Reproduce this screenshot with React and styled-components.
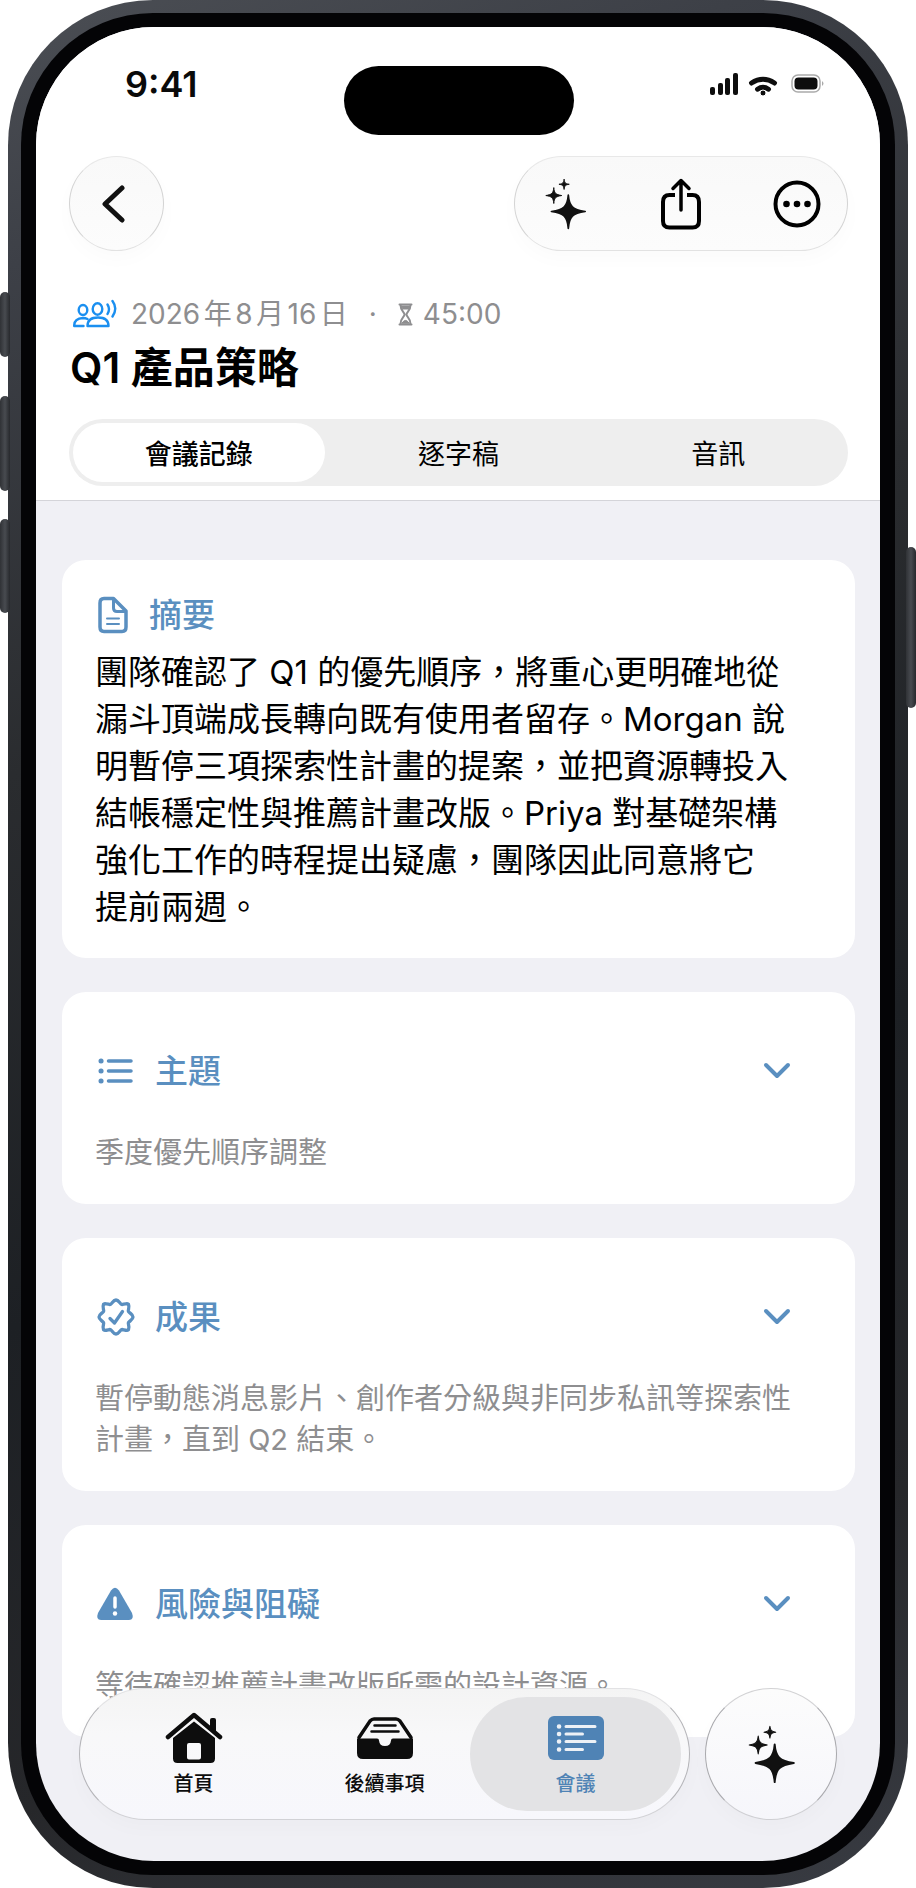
import React from 'react';
import styled, { createGlobalStyle } from "styled-components";

const GlobalStyle = createGlobalStyle`
    *, *::before, *::after {
        box-sizing: border-box;
    }
    body {
        margin: 0;
        background: #fff;
        font-family: Inter, "Noto Sans CJK TC", sans-serif;
        color: #0a0a0a;
    }
    button {
        font-family: inherit;
        color: inherit;
        border: 0;
        padding: 0;
        background: none;
        cursor: pointer;
    }
    h1, h2, p {
        margin: 0;
    }
    svg {
        display: block;
        flex: none;
    }
`

const Phone = styled.div`
    position: relative;
    margin: 0 8px;
    min-height: 100vh;
    padding: 13px;
    border-radius: 145px;
    background: linear-gradient(160deg, #4b4e54 0%, #3d4047 12%, #2a2c2f 35%, #1d2024 60%, #26272a 82%, #393c43 100%);
    display: flex;
`

const SideButton = styled.span`
    position: absolute;
    top: ${props => props.$top}px;
    ${props => props.$side}: -8px;
    width: 10px;
    height: ${props => props.$length}px;
    border-radius: 5px;
    background: linear-gradient(90deg, #303236, #484b50 50%, #27292d);
`

const Bezel = styled.div`
    flex: 1;
    display: flex;
    min-width: 0;
    padding: 14px 15px;
    border-radius: 132px;
    background: #040406;
`

const Screen = styled.div`
    position: relative;
    flex: 1;
    min-width: 0;
    overflow: hidden;
    border-radius: 118px;
    background: #f0f0f5;
`

const Header = styled.header`
    background: #fff;
    border-bottom: 1px solid #d4d4d9;
    padding: 39px 32px 14px 33px;
`

const StatusBar = styled.div`
    display: grid;
    grid-template-columns: 1fr 230px 1fr;
    align-items: start;
`

const Clock = styled.time`
    padding: 0 0 0 56px;
    font-size: 36px;
    line-height: 36px;
    font-weight: 600;
`

const Island = styled.div`
    height: 69px;
    border-radius: 35px;
    background: #000;
`

const StatusIcons = styled.div`
    display: flex;
    justify-content: flex-end;
    padding: 6px 22px 0 0;
`

const Toolbar = styled.div`
    display: flex;
    justify-content: space-between;
    margin-top: 21px;
`

const Glass = styled.div`
    display: flex;
    align-items: center;
    justify-content: space-between;
    border: 1px solid #d4d4d4;
    border-top-color: #e8e8e8;
    border-bottom-color: #e2e2e2;
    border-radius: 66px;
    background: linear-gradient(#f9f9f9, #fcfcfc);
    box-shadow: 0 8px 20px rgba(0, 0, 0, 0.02);
`

const RoundButton = styled(Glass).attrs({ as: "button" })`
    justify-content: center;
    width: ${props => props.$size}px;
    height: ${props => props.$size}px;
`

const BackButton = styled(RoundButton)`
    padding-right: 6px;
`

const ActionGroup = styled(Glass)`
    width: 334px;
    height: 95px;
    padding: 0 10px;
`

const IconButton = styled.button`
    width: 80px;
    height: 80px;
    display: grid;
    place-items: center;
`

const Meta = styled.div`
    display: flex;
    align-items: center;
    margin-top: 43px;
    padding-left: 4px;
    font-size: 28px;
    line-height: 40px;
    color: #8e8e90;
`

const DateText = styled.time`
    margin-left: 14px;
    text-autospace: normal;
`

const Dot = styled.span`
    margin: 0 21px;
`

const Duration = styled.span`
    display: flex;
    align-items: center;
    gap: 10px;
`

const Title = styled.h1`
    margin-top: 9px;
    padding-left: 1px;
    font-size: 42px;
    line-height: 50px;
    font-weight: 600;
    color: #000;
`

const Tabs = styled.div`
    display: grid;
    grid-template-columns: repeat(3, 1fr);
    gap: 8px;
    margin-top: 26px;
    padding: 4px;
    border-radius: 34px;
    background: #eee;
`

const Tab = styled.button`
    height: 59px;
    border-radius: 30px;
    font-size: 27px;
    font-weight: ${props => (props.$active ? 500 : 400)};
    color: #000;
    background: ${props => (props.$active ? "#fff" : "transparent")};
`

const Content = styled.main`
    display: flex;
    flex-direction: column;
    gap: 34px;
    padding: 59px 25px 120px 26px;
`

const Card = styled.section`
    padding: ${props => (props.$open ? "33px 56px 27px 33px" : "57px 64px 31px 33px")};
    border-radius: 24px;
    background: #fff;
`

const CardHead = styled.div`
    display: flex;
    align-items: center;
    height: 44px;
    color: #5a8fc0;
`

const HeadIcon = styled.span`
    width: ${props => (props.$narrow ? "54px" : "60px")};
`

const CardTitle = styled.h2`
    flex: 1;
    font-size: 33px;
    line-height: 44px;
    font-weight: 500;
`

const Body = styled.p`
    margin-top: 12px;
    font-size: 33px;
    line-height: 47px;
    white-space: nowrap;
    color: #000;
`

const Note = styled.p`
    margin-top: 39px;
    font-size: 29px;
    line-height: 41px;
    white-space: nowrap;
    color: #8e8e90;
`

const Dock = styled.div`
    position: absolute;
    left: 43px;
    right: 43px;
    bottom: 41px;
    display: flex;
    gap: 15px;
`

const DockGlass = styled(Glass).attrs({ as: "nav" })`
    flex: 1;
    display: grid;
    grid-template-columns: repeat(3, 1fr);
    height: 132px;
    padding: 8px 18px;
    border-color: #e2e2e4 #b4b4b8 #d2d2d6;
    background: linear-gradient(#f4f4f4 0%, #f8f8f9 35%, #f7f7fc 100%);
`

const DockButton = styled(RoundButton)`
    flex: none;
    border-color: #d2d2d4 #a8a8ac #cfcfd3;
    background: linear-gradient(#fcfcfc, #f6f6fb);
`

const NavItem = styled.a`
    height: 114px;
    margin: 0 -10px;
    display: flex;
    flex-direction: column;
    align-items: center;
    gap: 7px;
    padding-top: 15px;
    border-radius: 57px;
    font-size: 20px;
    line-height: 26px;
    font-weight: 500;
    text-decoration: none;
    color: ${props => (props.$active ? "#4f83b5" : "#0d0d0d")};
    background: ${props => (props.$active ? "#e3e3e5" : "transparent")};
`

const Sparkles = ({ width, height }) => (
    <svg width={width} height={height} viewBox="0 0 48 56" fill="#111" stroke="#111" strokeLinejoin="round">
        <path d="M27 19C28 31 31.500 34.500 45 36.500C31.500 38.500 28 42 27 54.500C26 42 22.500 38.500 9 36.500C22.500 34.500 26 31 27 19Z" strokeWidth="1.800" />
        <path d="M11.500 11C12 17 13.500 18.500 20 19.500C13.500 20.500 12 22 11.500 28C11 22 9.500 20.500 3 19.500C9.500 18.500 11 17 11.500 11Z" />
        <path d="M22.500 2C23 6 24 7 28 7.500C24 8 23 9 22.500 13C22 9 21 8 17 7.500C21 7 22 6 22.500 2Z" />
    </svg>
)

const SignalIcons = () => (
    <svg width="116" height="24" viewBox="0 0 116 24" fill="#0e0e0e">
        <rect x="0" y="15" width="5" height="8" rx="2" />
        <rect x="8" y="11" width="5" height="12" rx="2" />
        <rect x="15" y="6" width="5" height="17" rx="2" />
        <rect x="23" y="1" width="5" height="22" rx="2" />
        <g fill="none" stroke="#0e0e0e" strokeLinecap="round">
            <path d="M41.500 11Q53 3.500 64.500 11" strokeWidth="5" />
            <path d="M47.500 17.200Q53 13.500 58.500 17.200" strokeWidth="5" />
        </g>
        <circle cx="53" cy="21" r="3" stroke="#fff" strokeWidth="1" />
        <rect x="82" y="3" width="28" height="17" rx="6" fill="none" stroke="#aaa" strokeWidth="1.500" />
        <rect x="84.500" y="5.500" width="23" height="12" rx="4" />
        <path d="M112 9q3 2.500 0 5z" fill="#aaa" />
    </svg>
)

const BackIcon = () => (
    <svg width="24" height="38" viewBox="0 0 24 38" fill="none" stroke="#111" strokeWidth="5" strokeLinecap="round" strokeLinejoin="round">
        <path d="M20 3L3 19L20 35" />
    </svg>
)

const ShareIcon = () => (
    <svg width="42" height="52" viewBox="0 0 42 52" fill="none" stroke="#000" strokeWidth="4" strokeLinecap="round" strokeLinejoin="round">
        <path d="M15 17H9.500Q3 17 3 24V43Q3 49.500 9.500 49.500H32.500Q39 49.500 39 43V24Q39 17 32.500 17H27" strokeLinecap="butt" />
        <path d="M21 32V3M13 10.500L21 2.500L29 10.500" strokeWidth="3.500" />
    </svg>
)

const MoreIcon = () => (
    <svg width="48" height="48" viewBox="0 0 48 48">
        <circle cx="24" cy="24" r="21.500" fill="none" stroke="#000" strokeWidth="4" />
        <circle cx="13.500" cy="24" r="3.300" />
        <circle cx="24" cy="24" r="3.300" />
        <circle cx="34.500" cy="24" r="3.300" />
    </svg>
)

const PeopleIcon = () => (
    <svg width="44" height="30" viewBox="0 0 44 30" fill="none" stroke="#1a8ff0" strokeWidth="2.400" strokeLinecap="round" strokeLinejoin="round">
        <ellipse cx="10" cy="11" rx="4.300" ry="5" />
        <ellipse cx="24.500" cy="10" rx="4.800" ry="5.700" />
        <path d="M14.500 27Q14.500 18.500 25 18.500T35.500 27Z" />
        <path d="M10.500 27H1.200Q1 19.500 10 19Q12.500 19 14.500 20" />
        <path d="M34.500 5.500Q37.500 10 34.500 15M39.500 2Q45 9.500 39.500 17.500" />
    </svg>
)

const HourglassIcon = () => (
    <svg width="15" height="23" viewBox="0 0 15 23" fill="none" stroke="#8e8e90" strokeWidth="2" strokeLinecap="round" strokeLinejoin="round">
        <path d="M1.500 1.500H13.500M1.500 21.500H13.500M2.500 2C2.500 8 6.500 9 6.500 11.500C6.500 14 2.500 15 2.500 21M12.500 2C12.500 8 8.500 9 8.500 11.500C8.500 14 12.500 15 12.500 21" />
        <path d="M3.500 3H11.500L10.500 6H4.500ZM4 20Q7.500 14.500 11 20Z" fill="#8e8e90" strokeWidth="1" />
    </svg>
)

const DocIcon = () => (
    <svg width="36" height="38" viewBox="0 0 36 38" fill="none" stroke="currentColor" strokeWidth="3.500" strokeLinecap="round" strokeLinejoin="round">
        <path d="M9 2.500H18.500L31 15V31Q31 35.500 27 35.500H9Q5 35.500 5 31V7Q5 2.500 9 2.500Z" />
        <path d="M18.500 3V12Q18.500 15.500 22 15.500H30.500" strokeWidth="3" />
        <path d="M12 22.500H24M12 28H24" strokeWidth="2" />
    </svg>
)

const ListIcon = () => (
    <svg width="40" height="38" viewBox="0 0 40 38" fill="none" stroke="currentColor" strokeWidth="3.500" strokeLinecap="round">
        <path d="M13.500 9H36M13.500 19H36M13.500 29H36" />
        <path d="M6 9H6.100M6 19H6.100M6 29H6.100" strokeWidth="5" />
    </svg>
)

const BadgeIcon = () => (
    <svg width="42" height="40" viewBox="-21 -20 42 40" fill="none" stroke="currentColor" strokeWidth="3.300" strokeLinecap="round" strokeLinejoin="round">
        <path d="M0-17C3-17 4-12.500 6-12.500C9-13 12.500-14 12.500-12.500C14-9 11.500-7 12.500-5.500C14-3.500 17-2.500 17 0C17 2.500 14 3.500 12.500 5.500C11.500 7 14 9 12.500 12.500C12.500 14 9 13 6 12.500C4 12.500 3 17 0 17C-3 17-4 12.500-6 12.500C-9 13-12.500 14-12.500 12.500C-14 9-11.500 7-12.500 5.500C-14 3.500-17 2.500-17 0C-17-2.500-14-3.500-12.500-5.500C-11.500-7-14-9-12.500-12.500C-12.500-14-9-13-6-12.500C-4-12.500-3-17 0-17Z" />
        <path d="M-6 1.500L-1.500 6L6.500-5.500" />
    </svg>
)

const WarningIcon = () => (
    <svg width="40" height="38" viewBox="0 0 40 38">
        <path d="M16 5.500Q20 0 24 5.500L37 28Q39.500 35 34 35H6Q0.500 35 3 28Z" fill="currentColor" />
        <path d="M20 13V22" stroke="#fff" strokeWidth="3.500" strokeLinecap="round" />
        <circle cx="20" cy="28.500" r="2.200" fill="#fff" />
    </svg>
)

const ChevronIcon = () => (
    <svg width="28" height="18" viewBox="0 0 28 18" fill="none" stroke="#5a8fc0" strokeWidth="4" strokeLinecap="round" strokeLinejoin="round">
        <path d="M3 3L14 14L25 3" />
    </svg>
)

const HomeIcon = () => (
    <svg width="58" height="52" viewBox="0 0 58 52" fill="#0d0d0d">
        <path d="M3 25L29 3L55 25" fill="none" stroke="#0d0d0d" strokeWidth="4.500" strokeLinecap="round" strokeLinejoin="round" />
        <path d="M45 8Q45 6 47 6H49Q51 6 51 8V20L45 15Z" />
        <path d="M29 9.500L50 26V46.500Q50 51 45.500 51H12.500Q8 51 8 46.500V26ZM24 31Q22 31 22 33V45.500Q22 47.500 24 47.500H34Q36 47.500 36 45.500V33Q36 31 34 31Z" fillRule="evenodd" />
    </svg>
)

const TrayIcon = () => (
    <svg width="58" height="52" viewBox="0 0 58 52">
        <path d="M3 25.500L14 9Q16 7 18 7H40Q42 7 44 9L55 25.500" fill="none" stroke="#0d0d0d" strokeWidth="3.500" strokeLinecap="round" />
        <path d="M1 26.500H21Q23 26.500 23 28.500Q23.500 34 29 34T35 28.500Q35 26.500 37 26.500H57V41Q57 47 51 47H7Q1 47 1 41Z" fill="#0d0d0d" />
        <path d="M18.500 13.500H39.500M15.500 19.500H42.500" stroke="#0d0d0d" strokeWidth="2.500" strokeLinecap="round" />
    </svg>
)

const MeetingIcon = () => (
    <svg width="58" height="52" viewBox="0 0 58 52">
        <rect x="1" y="4" width="56" height="44" rx="6" fill="#4f83b5" />
        <g stroke="#edf1f6" strokeLinecap="round">
            <path d="M19 14.500H48M19 22H35.500M19 29.500H48M19 37.500H35.500" strokeWidth="3" />
            <path d="M12 14.500H12.100M12 22H12.100M12 29.500H12.100M12 37.500H12.100" strokeWidth="4.500" />
        </g>
    </svg>
)

const sections = [
    { title: "主題", Icon: ListIcon, lines: ["季度優先順序調整"] },
    { title: "成果", Icon: BadgeIcon, lines: ["暫停動態消息影片、創作者分級與非同步私訊等探索性", "計畫，直到 Q2 結束。"] },
    { title: "風險與阻礙", Icon: WarningIcon, lines: ["等待確認推薦計畫改版所需的設計資源。"] },
]

const summary = [
    "團隊確認了 Q1 的優先順序，將重心更明確地從",
    "漏斗頂端成長轉向既有使用者留存。Morgan 說",
    "明暫停三項探索性計畫的提案，並把資源轉投入",
    "結帳穩定性與推薦計畫改版。Priya 對基礎架構",
    "強化工作的時程提出疑慮，團隊因此同意將它",
    "提前兩週。",
]

const Lines = ({ lines }) => lines.map((line, i) => (
    <React.Fragment key={line}>
        {i > 0 && <br />}
        {line}
    </React.Fragment>
))

const App = () => {
    return (
        <>
        <GlobalStyle />
        <Phone lang="zh-Hant">
            <SideButton $side="left" $top={292} $length={65} />
            <SideButton $side="left" $top={396} $length={95} />
            <SideButton $side="left" $top={519} $length={94} />
            <SideButton $side="right" $top={547} $length={161} />
            <Bezel>
                <Screen>
                    <Header>
                        <StatusBar>
                            <Clock>9:41</Clock>
                            <Island />
                            <StatusIcons><SignalIcons /></StatusIcons>
                        </StatusBar>
                        <Toolbar>
                            <BackButton $size={95} aria-label="返回"><BackIcon /></BackButton>
                            <ActionGroup>
                                <IconButton aria-label="AI"><Sparkles width={45} height={53} /></IconButton>
                                <IconButton aria-label="分享"><ShareIcon /></IconButton>
                                <IconButton aria-label="更多"><MoreIcon /></IconButton>
                            </ActionGroup>
                        </Toolbar>
                        <Meta>
                            <PeopleIcon />
                            <DateText>2026年8月16日</DateText>
                            <Dot>·</Dot>
                            <Duration><HourglassIcon />45:00</Duration>
                        </Meta>
                        <Title>Q1 產品策略</Title>
                        <Tabs role="tablist">
                            <Tab role="tab" aria-selected="true" $active>會議記錄</Tab>
                            <Tab role="tab" aria-selected="false">逐字稿</Tab>
                            <Tab role="tab" aria-selected="false">音訊</Tab>
                        </Tabs>
                    </Header>
                    <Content>
                        <Card $open>
                            <CardHead>
                                <HeadIcon $narrow><DocIcon /></HeadIcon>
                                <CardTitle>摘要</CardTitle>
                            </CardHead>
                            <Body><Lines lines={summary} /></Body>
                        </Card>
                        {sections.map(({ title, Icon, lines }) => (
                            <Card key={title}>
                                <CardHead>
                                    <HeadIcon><Icon /></HeadIcon>
                                    <CardTitle>{title}</CardTitle>
                                    <button aria-label={title}><ChevronIcon /></button>
                                </CardHead>
                                <Note><Lines lines={lines} /></Note>
                            </Card>
                        ))}
                    </Content>
                    <Dock>
                        <DockGlass>
                            <NavItem href="#home"><HomeIcon />首頁</NavItem>
                            <NavItem href="#follow-ups"><TrayIcon />後續事項</NavItem>
                            <NavItem href="#meetings" $active><MeetingIcon />會議</NavItem>
                        </DockGlass>
                        <DockButton $size={132} aria-label="AI"><Sparkles width={51} height={60} /></DockButton>
                    </Dock>
                </Screen>
            </Bezel>
        </Phone>
        </>
    )
}

export default App
